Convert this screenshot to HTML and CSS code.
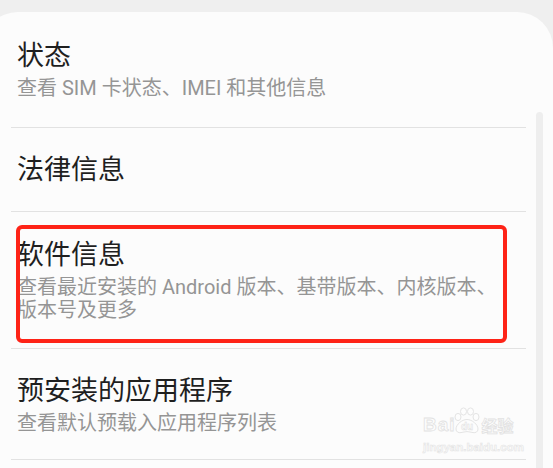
FILE: index.html
```html
<!DOCTYPE html>
<html lang="zh-CN">
<head>
<meta charset="utf-8">
<title>关于手机</title>
<link rel="stylesheet" href="styles.css">
</head>
<body>
<div class="card">
  <div class="item">
    <div class="title">状态</div>
    <div class="sub">查看 SIM 卡状态、IMEI 和其他信息</div>
  </div>
  <div class="divider"></div>
  <div class="item single">
    <div class="title">法律信息</div>
  </div>
  <div class="divider"></div>
  <div class="item highlighted">
    <div class="title">软件信息</div>
    <div class="sub">查看最近安装的 Android 版本、基带版本、内核版本、版本号及更多</div>
    <div class="mark"></div>
  </div>
  <div class="divider"></div>
  <div class="item last">
    <div class="title">预安装的应用程序</div>
    <div class="sub">查看默认预载入应用程序列表</div>
  </div>
  <div class="divider"></div>
  <div class="scrollbar"></div>
  <div class="watermark">
    <div class="wm-row">
      <span class="wm-bai">Bai</span>
      <svg class="wm-paw" width="30" height="27" viewBox="0 0 30 27">
        <g fill="#fdfdfd" stroke="#e4e4e4" stroke-width="1">
          <ellipse cx="6" cy="10" rx="3" ry="3.6"/>
          <ellipse cx="11.5" cy="4.5" rx="3" ry="3.6"/>
          <ellipse cx="18.5" cy="4.5" rx="3" ry="3.6"/>
          <ellipse cx="24" cy="10" rx="3" ry="3.6"/>
          <path d="M15 12.5c-5 0-11 5-11 9.5 0 3 2.5 4 5 3.6 2-.3 4-1 6-1s4 .7 6 1c2.5.4 5-.6 5-3.6 0-4.5-6-9.5-11-9.5z"/>
        </g>
        <text x="15" y="23" text-anchor="middle" class="wm-du">du</text>
      </svg>
      <span class="wm-jy">经验</span>
    </div>
    <div class="wm-url">jingyan.baidu.com</div>
  </div>
</div>
</body>
</html>
```

FILE: styles.css
```css
html, body {
  margin: 0;
  padding: 0;
}

body {
  background: #efefef;
  width: 553px;
  height: 468px;
  overflow: hidden;
  font-family: Roboto, "Noto Sans CJK SC", sans-serif;
}

.card {
  position: relative;
  margin: 12px 0 0 -18px;
  width: 571px;
  height: 456px;
  background: #fcfcfc;
  border-radius: 36px 36px 0 0;
}

.item {
  position: relative;
  padding: 27px 48px 27px 35px;
}

.item.single {
  padding: 25px 48px 24px 35px;
}

.item.highlighted {
  padding: 26px 48px 26px 35px;
}

.item.last {
  padding: 25px 48px 24px 35px;
}

.title {
  font-size: 27px;
  line-height: 34px;
  color: #1f1f1f;
  margin-bottom: 4px;
}

.single .title {
  margin-bottom: 0;
}

.sub {
  font-size: 20px;
  line-height: 23px;
  color: #959595;
}

.divider {
  height: 1px;
  background: #e2e2e2;
  margin: 0 27px 0 29px;
}

.mark {
  position: absolute;
  top: 13px;
  left: 34px;
  width: 491px;
  height: 118px;
  box-sizing: border-box;
  border: 4px solid #fe2317;
  border-radius: 6px;
}

.scrollbar {
  position: absolute;
  left: 554px;
  top: 100px;
  bottom: 0;
  width: 7px;
  background: #eeeeee;
  border-radius: 4px 4px 0 0;
}

.watermark {
  position: absolute;
  left: 441px;
  top: 394px;
  width: 104px;
  color: #fdfdfd;
}

.wm-row {
  display: flex;
  align-items: flex-end;
  height: 28px;
}

.wm-bai {
  font-family: "Liberation Sans", sans-serif;
  font-weight: bold;
  font-size: 19px;
  line-height: 18px;
  letter-spacing: 1px;
  -webkit-text-stroke: 0.8px #e2e2e2;
}

.wm-paw {
  display: block;
  margin-left: -4px;
}

.wm-du {
  font-family: "Liberation Sans", sans-serif;
  font-weight: bold;
  font-size: 10px;
  fill: #fdfdfd;
  stroke: #e0e0e0;
  stroke-width: 0.5px;
}

.wm-jy {
  font-family: "Noto Sans CJK SC", sans-serif;
  font-weight: bold;
  font-size: 16px;
  line-height: 17px;
  -webkit-text-stroke: 0.8px #e2e2e2;
}

.wm-url {
  margin-top: 7px;
  font-family: "Liberation Sans", sans-serif;
  font-weight: bold;
  font-size: 11.5px;
  line-height: 12px;
  -webkit-text-stroke: 0.6px #e4e4e4;
}
```
